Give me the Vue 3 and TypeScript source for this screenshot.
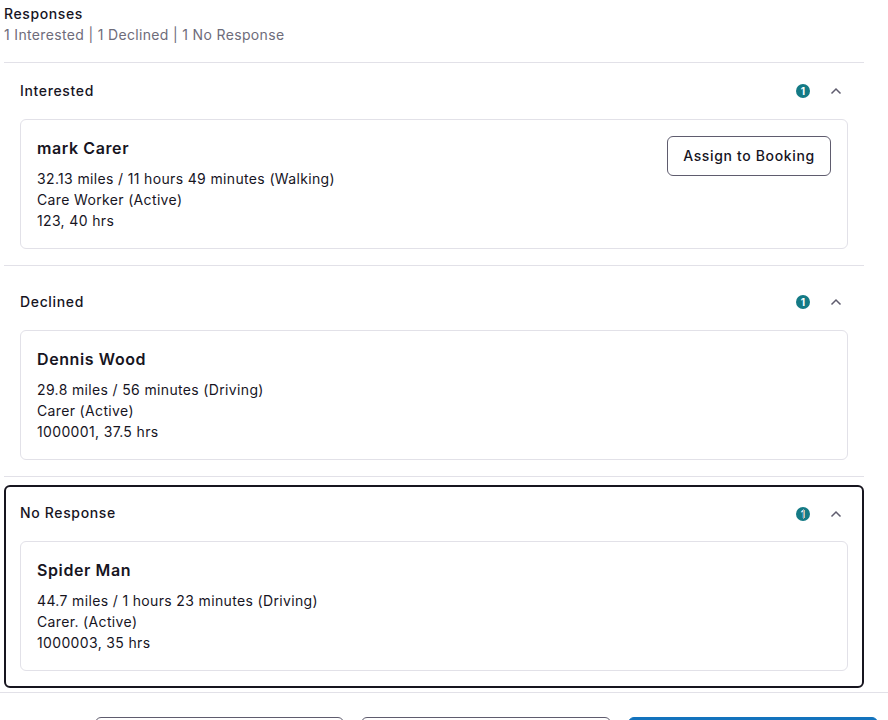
<script setup lang="ts">
interface Carer {
  name: string;
  travel: string;
  role: string;
  hours: string;
}

interface Group {
  title: string;
  count: number;
  carer: Carer;
  assign?: boolean;
  focused?: boolean;
}

const groups: Group[] = [
  {
    title: 'Interested',
    count: 1,
    assign: true,
    carer: {
      name: 'mark Carer',
      travel: '32.13 miles / 11 hours 49 minutes (Walking)',
      role: 'Care Worker (Active)',
      hours: '123, 40 hrs'
    }
  },
  {
    title: 'Declined',
    count: 1,
    carer: {
      name: 'Dennis Wood',
      travel: '29.8 miles / 56 minutes (Driving)',
      role: 'Carer (Active)',
      hours: '1000001, 37.5 hrs'
    }
  },
  {
    title: 'No Response',
    count: 1,
    focused: true,
    carer: {
      name: 'Spider Man',
      travel: '44.7 miles / 1 hours 23 minutes (Driving)',
      role: 'Carer. (Active)',
      hours: '1000003, 35 hrs'
    }
  }
];
</script>

<template>
  <div class="page">
    <div class="summary">
      <div class="summary-title">Responses</div>
      <div class="summary-sub">1 Interested | 1 Declined | 1 No Response</div>
    </div>

    <div class="groups">
      <section
        v-for="group in groups"
        :key="group.title"
        class="group"
        :class="{ focused: group.focused }"
      >
        <div class="group-head">
          <span class="group-title">{{ group.title }}</span>
          <span class="count">{{ group.count }}</span>
          <svg class="chevron" width="12" height="8" viewBox="0 0 12 8" fill="none">
            <path d="M1.5 6.5 L6 2 L10.5 6.5" stroke="#5f5c6e" stroke-width="1.5" />
          </svg>
        </div>
        <div class="card">
          <div class="card-info">
            <div class="carer-name">{{ group.carer.name }}</div>
            <div class="carer-line">{{ group.carer.travel }}</div>
            <div class="carer-line">{{ group.carer.role }}</div>
            <div class="carer-line">{{ group.carer.hours }}</div>
          </div>
          <button v-if="group.assign" class="assign">Assign to Booking</button>
        </div>
      </section>
    </div>

    <div class="footer">
      <button class="foot-btn first"></button>
      <button class="foot-btn"></button>
      <button class="foot-btn primary"></button>
    </div>
  </div>
</template>

<style>
html,
body {
  margin: 0;
  background: #fff;
}
</style>

<style scoped>
.page {
  width: 888px;
  height: 720px;
  overflow: hidden;
  box-sizing: border-box;
  font-family: Inter, "Liberation Sans", sans-serif;
  color: #17151f;
}

.summary {
  margin: 0 24px 0 4px;
  height: 63px;
  box-sizing: border-box;
  padding-top: 5px;
  border-bottom: 1px solid #e2e1e8;
}

.summary-title {
  font-size: 14px;
  font-weight: 500;
  line-height: 18px;
  letter-spacing: 0.6px;
}

.summary-sub {
  margin-top: 2px;
  font-size: 14px;
  line-height: 20px;
  letter-spacing: 0.34px;
  color: #6e6c7a;
}

.groups {
  margin: 0 24px 0 4px;
}

.group {
  height: 203px;
  box-sizing: border-box;
  padding: 0 16px;
  border-bottom: 1px solid #e2e1e8;
  margin-bottom: 8px;
}

.group.focused {
  border: 2px solid #17151f;
  border-radius: 6px;
  padding: 0 14px;
  margin-bottom: 0;
}

.group-head {
  height: 56px;
  display: flex;
  align-items: center;
}

.focused .group-head {
  height: 54px;
}

.group-title {
  flex: 1;
  margin-top: -1px;
  font-size: 14px;
  font-weight: 500;
  letter-spacing: 0.65px;
}

.focused .group-title {
  margin-top: -3px;
}

.count {
  position: relative;
  width: 14px;
  height: 14px;
  border-radius: 50%;
  background: #147a85;
  color: #fff;
  font-size: 10px;
  font-weight: 700;
  line-height: 14px;
  text-align: center;
}

/* text caret sitting over the badge in the reference */
.focused .count::after {
  content: "";
  position: absolute;
  left: 7px;
  top: 2px;
  width: 1px;
  height: 10px;
  background: #8fa9b0;
}

.chevron {
  margin: 0 6px 0 20px;
}

.card {
  height: 130px;
  box-sizing: border-box;
  padding: 16px;
  display: flex;
  justify-content: space-between;
  align-items: flex-start;
  border: 1px solid #e2e1e8;
  border-radius: 6px;
}

.carer-name {
  font-size: 16px;
  font-weight: 600;
  line-height: 24px;
  letter-spacing: 0.6px;
  margin-bottom: 8px;
}

.carer-line {
  font-size: 14px;
  line-height: 21px;
  letter-spacing: 0.35px;
}

.assign {
  width: 164px;
  height: 40px;
  padding: 0 0 2px;
  background: #fff;
  border: 1px solid #5f5c6e;
  border-radius: 6px;
  font-family: inherit;
  font-size: 14px;
  font-weight: 500;
  letter-spacing: 0.65px;
  color: #17151f;
}

.footer {
  margin-top: 4px;
  padding: 24px 10px 0 0;
  border-top: 1px solid #e2e1e8;
  display: flex;
  justify-content: flex-end;
  gap: 17px;
}

.foot-btn {
  width: 250px;
  height: 40px;
  padding: 0;
  background: #fff;
  border: 1px solid #5f5c6e;
  border-radius: 6px;
}

.foot-btn.first {
  width: 249px;
}

.foot-btn.primary {
  background: #1373bd;
  border-color: #1373bd;
}
</style>
